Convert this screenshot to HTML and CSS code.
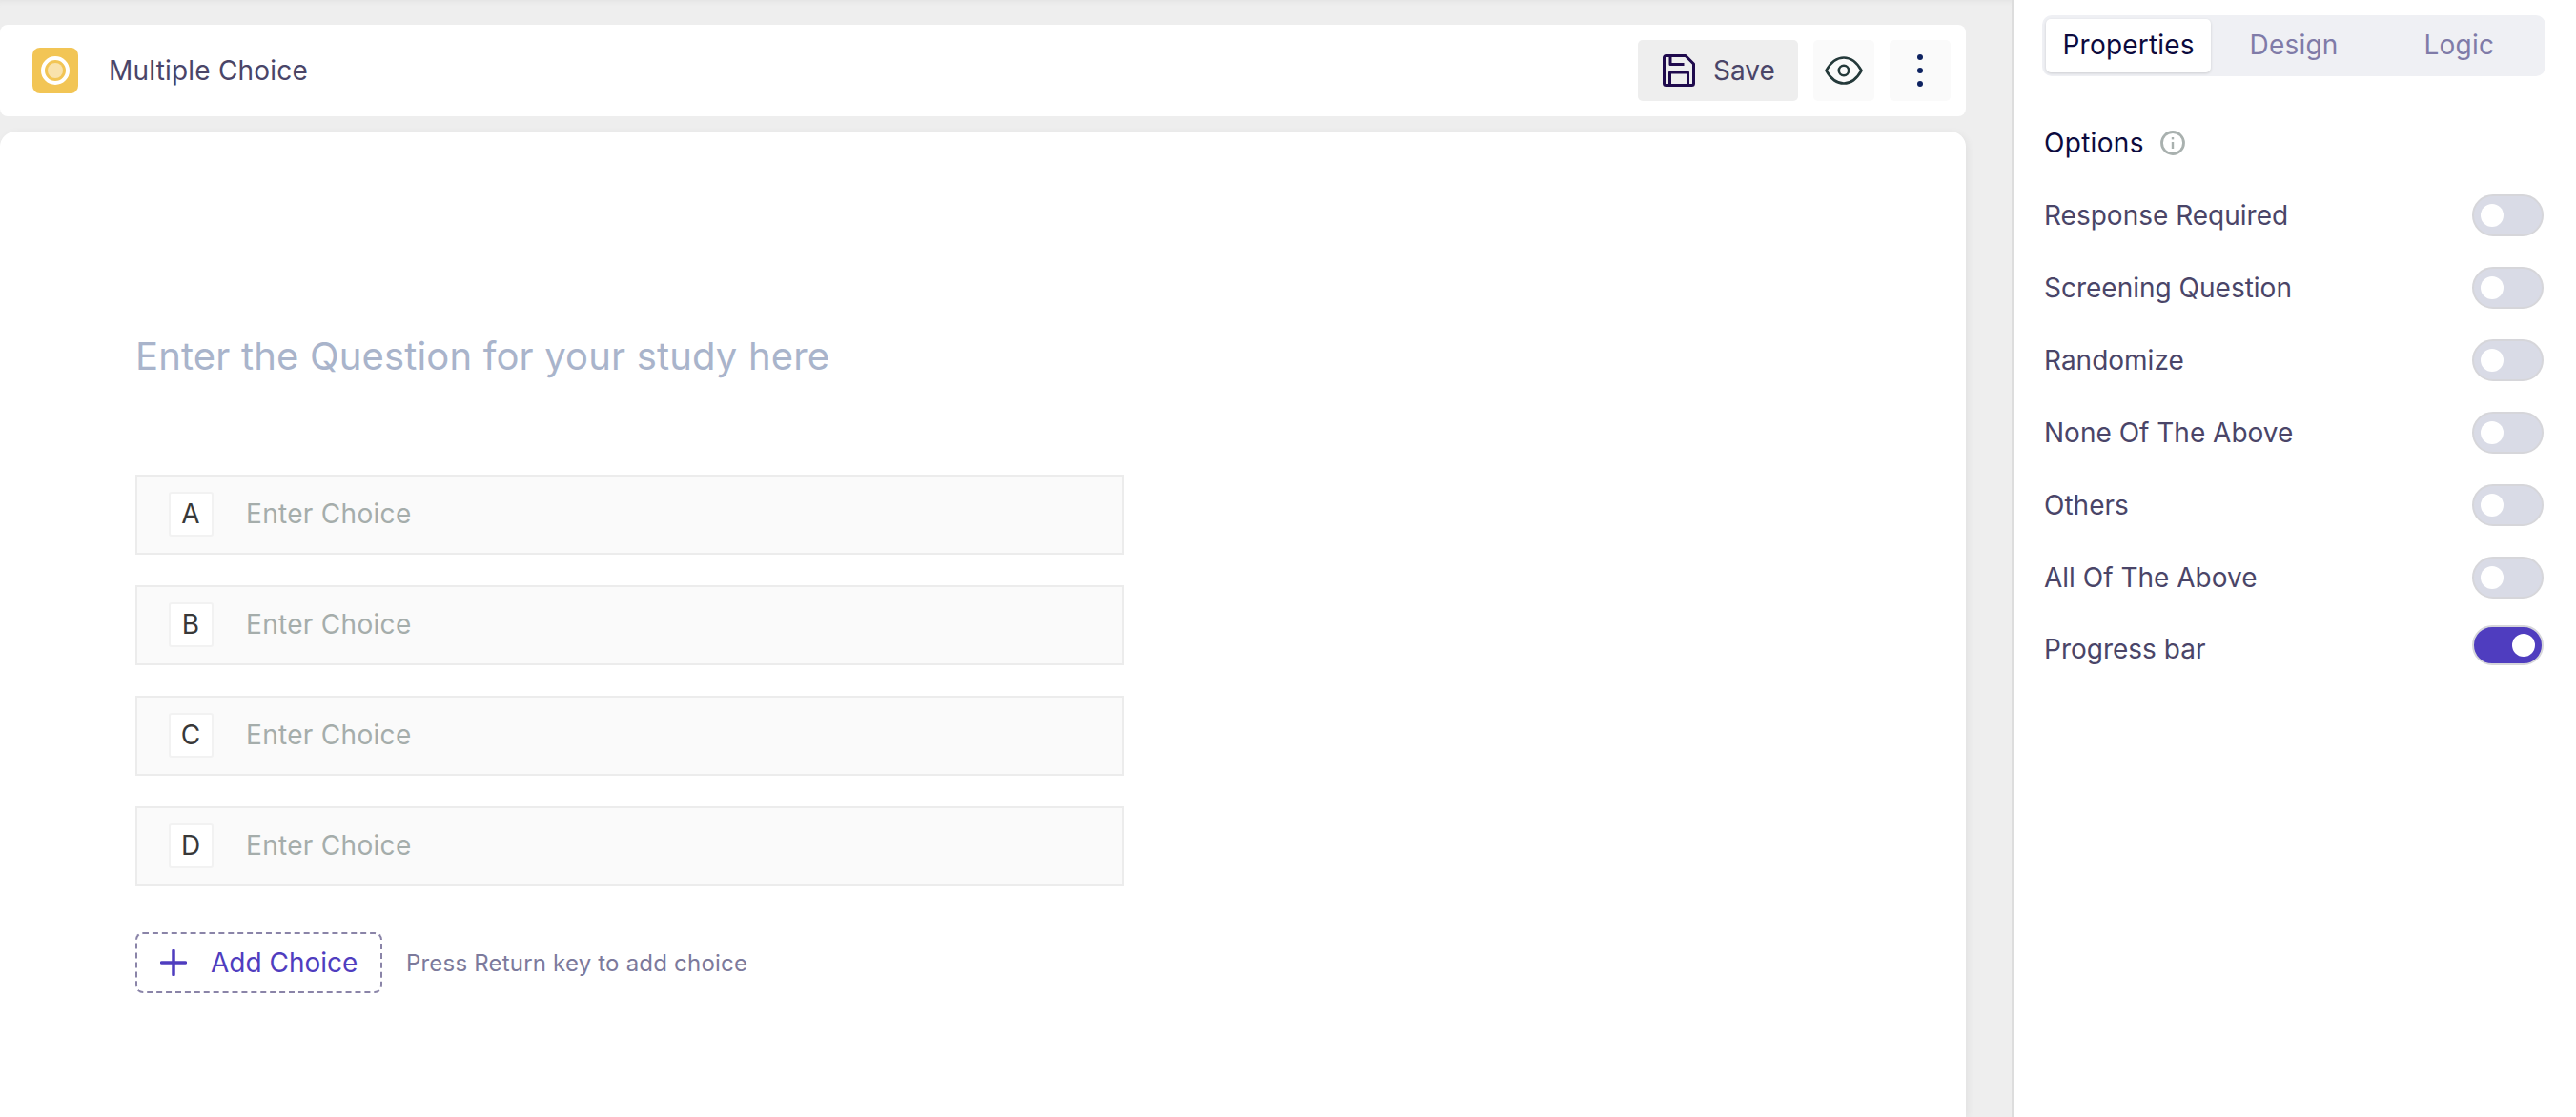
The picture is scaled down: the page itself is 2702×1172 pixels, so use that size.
FILE: index.html
```html
<!DOCTYPE html>
<html lang="en">
<head>
<meta charset="utf-8">
<title>Multiple Choice</title>
<link rel="stylesheet" href="styles.css">
</head>
<body>
<div class="app">
  <main class="editor">
    <header class="topbar">
      <div class="title-group">
        <span class="type-icon">
          <svg width="48" height="48" viewBox="0 0 48 48"><circle cx="24" cy="24" r="13" fill="none" stroke="#fff" stroke-width="4"/><circle cx="24" cy="24" r="8" fill="#f9e2ac"/></svg>
        </span>
        <span class="title">Multiple Choice</span>
      </div>
      <div class="actions">
        <button class="btn btn-save">
          <svg width="36" height="36" viewBox="0 0 36 36" fill="none" stroke="#1f0a4d" stroke-width="3" stroke-linejoin="round"><path d="M2.500 4.500a2 2 0 0 1 2-2h20.500l8.500 8.500v20.500a2 2 0 0 1-2 2h-27a2 2 0 0 1-2-2z"/><path d="M9 2.500v9h14.500"/><path d="M8.500 33.500v-13.500h19v13.500"/></svg>
          <span>Save</span>
        </button>
        <button class="btn btn-icon">
          <svg width="40" height="30" viewBox="0 0 40 30" fill="none" stroke="#24393a" stroke-width="2.600"><path d="M1.500 15C6.500 6 12.500 1.500 20 1.500S33.500 6 38.500 15C33.500 24 27.500 28.500 20 28.500S6.500 24 1.500 15z" stroke-linejoin="round"/><circle cx="20" cy="15" r="5.200"/></svg>
        </button>
        <button class="btn btn-icon">
          <svg width="8" height="36" viewBox="0 0 8 36" fill="#0d2260"><circle cx="4" cy="4" r="3"/><circle cx="4" cy="18" r="3"/><circle cx="4" cy="32" r="3"/></svg>
        </button>
      </div>
    </header>
    <section class="canvas">
      <h1 class="question">Enter the Question for your study here</h1>
      <div class="choices">
        <div class="choice"><span class="badge">A</span><span class="choice-text">Enter Choice</span></div>
        <div class="choice"><span class="badge">B</span><span class="choice-text">Enter Choice</span></div>
        <div class="choice"><span class="badge">C</span><span class="choice-text">Enter Choice</span></div>
        <div class="choice"><span class="badge">D</span><span class="choice-text">Enter Choice</span></div>
      </div>
      <div class="add-row">
        <button class="add-btn">
          <svg width="28" height="28" viewBox="0 0 28 28" fill="none" stroke="#4f3dbf" stroke-width="3.500" stroke-linecap="round"><path d="M14 1.500v25M1.500 14h25"/></svg>
          <span>Add Choice</span>
        </button>
        <span class="hint">Press Return key to add choice</span>
      </div>
    </section>
  </main>
  <aside class="sidebar">
    <nav class="tabs">
      <span class="tab tab-active">Properties</span>
      <span class="tab">Design</span>
      <span class="tab">Logic</span>
    </nav>
    <div class="options-head">
      <span>Options</span>
      <svg width="26" height="26" viewBox="0 0 26 26" fill="none" stroke="#a9b1af"><circle cx="13" cy="13" r="11.500" stroke-width="2.800"/><path d="M13 12v7" stroke-width="2.400"/><path d="M13 7v2.400" stroke-width="2.400"/></svg>
    </div>
    <ul class="options">
      <li class="option"><span>Response Required</span><span class="toggle"></span></li>
      <li class="option"><span>Screening Question</span><span class="toggle"></span></li>
      <li class="option"><span>Randomize</span><span class="toggle"></span></li>
      <li class="option"><span>None Of The Above</span><span class="toggle"></span></li>
      <li class="option"><span>Others</span><span class="toggle"></span></li>
      <li class="option"><span>All Of The Above</span><span class="toggle"></span></li>
      <li class="option option-on"><span class="option-on-label">Progress bar</span><span class="toggle toggle-on"></span></li>
    </ul>
  </aside>
</div>
</body>
</html>
```
FILE: styles.css
```css
* { box-sizing: border-box; }
html, body { margin: 0; height: 100%; overflow: hidden; }
body {
  font-family: Inter, "Liberation Sans", sans-serif;
  font-optical-sizing: none;
  color: #4a4568;
  background: #fff;
}
button { font: inherit; color: inherit; border: 0; padding: 0; }
.app { display: flex; height: 1172px; }
.editor {
  width: 2112px;
  flex: none;
  background: #eee;
  border-right: 2px solid #ddd;
  padding: 26px 48px 0 0;
  display: flex;
  flex-direction: column;
  gap: 16px;
  box-shadow: inset 0 6px 5px -4px #e4e4e4;
}
.topbar {
  height: 96px;
  flex: none;
  background: #fff;
  border-radius: 8px;
  display: flex;
  align-items: center;
  justify-content: space-between;
  padding: 0 16px 0 34px;
}
.title-group { display: flex; align-items: center; gap: 32px; }
.type-icon {
  width: 48px;
  height: 48px;
  background: #f2c555;
  border-radius: 8px;
  display: block;
}
.type-icon svg { display: block; }
.title { font-size: 28px; line-height: 48px; letter-spacing: .2px; }
.actions { display: flex; gap: 16px; }
.btn {
  height: 64px;
  border-radius: 5px;
  display: flex;
  align-items: center;
  justify-content: center;
}
.btn-save { width: 168px; background: #eee; gap: 18px; font-size: 28px; padding-left: 1px; }
.btn-icon { width: 64px; background: #fafafa; }
.canvas {
  flex: 1;
  background: #fff;
  border-radius: 16px 16px 0 0;
  box-shadow: 2px 2px 8px rgba(0,0,0,.06);
  padding: 0 0 0 142px;
}
.question {
  margin: 0;
  padding-top: 208px;
  font-size: 40px;
  line-height: 56px;
  font-weight: 400;
  letter-spacing: .16px;
  color: #a9b4cb;
}
.choices {
  margin-top: 96px;
  display: flex;
  flex-direction: column;
  gap: 32px;
}
.choice {
  width: 1037px;
  height: 84px;
  background: #fafafa;
  border: 2px solid #ececec;
  display: flex;
  align-items: center;
  padding-left: 33px;
  gap: 34px;
  padding-bottom: 2px;
}
.badge {
  width: 47px;
  height: 47px;
  background: #fff;
  border: 2px solid #f2f2f2;
  border-radius: 3px;
  display: flex;
  align-items: center;
  justify-content: center;
  font-size: 28px;
  color: #383838;
  padding-right: 1px;
}
.choice-text { font-size: 28px; letter-spacing: .3px; color: #a5adab; }
.add-row {
  margin-top: 48px;
  display: flex;
  align-items: center;
  gap: 25px;
}
.add-btn {
  width: 259px;
  height: 64px;
  background: #fff;
  border: 2px dashed #8a84a8;
  border-radius: 8px;
  display: flex;
  align-items: center;
  padding-left: 24px;
  gap: 25px;
  font-size: 28px;
  color: #4f3dbf;
}
.add-btn svg { flex: none; }
.hint { font-size: 24px; letter-spacing: .2px; color: #7c7a9c; }
.sidebar {
  flex: 1;
  padding: 16px 32px 0 30px;
  background: #fff;
}
.tabs {
  height: 64px;
  width: 528px;
  background: #eff0f4;
  border-radius: 10px;
  padding: 4px;
  display: grid;
  grid-template-columns: repeat(3, 1fr);
  align-items: stretch;
}
.tab {
  display: flex;
  align-items: center;
  justify-content: center;
  font-size: 28px;
  letter-spacing: .2px;
  padding-bottom: 2px;
  color: #7f7ba8;
  border-radius: 5px;
}
.tab-active {
  background: #fff;
  color: #0c0a3e;
  box-shadow: 0 1px 3px rgba(0,0,0,.15);
}
.options-head {
  margin: 50px 0 0 2px;
  height: 40px;
  display: flex;
  align-items: center;
  gap: 17px;
  font-size: 28px;
  letter-spacing: .3px;
  color: #0c0a3e;
}
.options { list-style: none; margin: 34px 0 0; padding: 0 0 0 2px; }
.option {
  height: 44px;
  margin-bottom: 32px;
  display: flex;
  align-items: center;
  justify-content: space-between;
  font-size: 28px;
  padding-right: 2px;
}
.toggle {
  width: 75px;
  height: 44px;
  border-radius: 22px;
  background: #d9dbe6;
  border: 2px solid #d6d6da;
  position: relative;
  flex: none;
}
.toggle::after {
  content: "";
  position: absolute;
  left: 7px;
  top: 8px;
  width: 24px;
  height: 24px;
  border-radius: 50%;
  background: #fff;
}
.option-on { margin-top: -5px; }
.option-on-label { padding-top: 8px; }
.toggle-on { height: 42px; background: #4f3dbf; }
.toggle-on::after { left: 40px; top: 7px; }
```
